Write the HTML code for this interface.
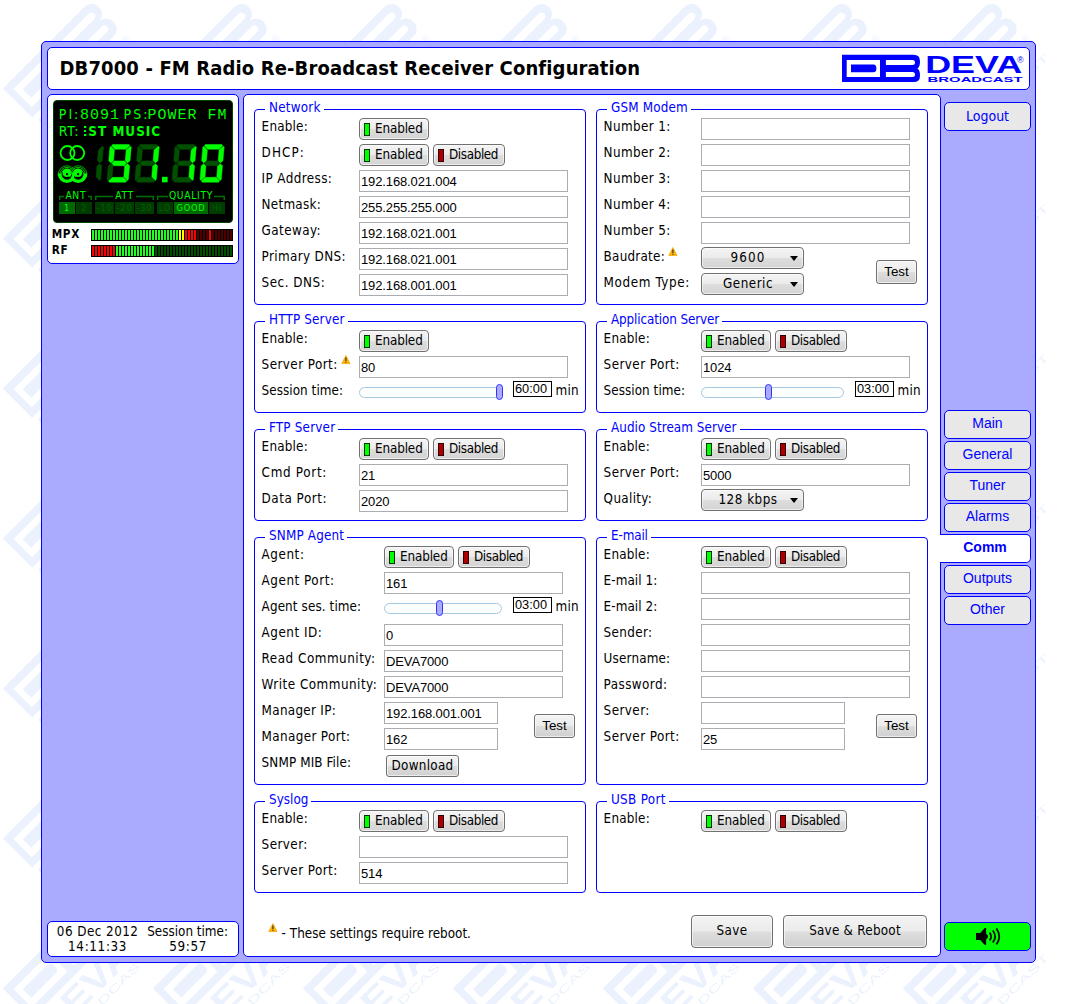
<!DOCTYPE html><html><head><meta charset="utf-8"><title>DB7000 - FM Radio Re-Broadcast Receiver Configuration</title><style>
*{box-sizing:border-box}
html,body{margin:0;padding:0}
body{width:1077px;height:1004px;position:relative;overflow:hidden;background:#fff;font-family:'DejaVu Sans Condensed','Liberation Sans',sans-serif;font-size:13.33px;color:#000}
.abs,.abs *{position:absolute}
div,span,svg,i,b{position:absolute;display:block}
.outer{left:41px;top:41px;width:995px;height:922px;background:#aaaaff;border:1px solid #0000ff;border-radius:5px}
.panel{background:#fff;border:1px solid #0000ff;border-radius:5px}
.fs{border:1px solid #0000ff;border-radius:4px}
.lg{background:#fff;color:#0000ff;height:14px;line-height:14px;padding:0 3px 0 4px;white-space:nowrap;letter-spacing:0.25px}
.lb{white-space:nowrap;height:16px;line-height:16px;letter-spacing:0.25px;margin-top:1px;margin-left:-0.4px}
.inp{background:#fff;border:1px solid #abadb3;height:22px;font-family:'Liberation Sans',sans-serif;font-size:13px;line-height:21px;padding-left:1px;white-space:nowrap;letter-spacing:-0.13px}
.btn{height:22px;border:1px solid #707070;border-radius:4px;background:linear-gradient(#f4f4f4 0%,#ebebeb 48%,#dddddd 52%,#d4d4d4 100%);white-space:nowrap;line-height:20px;box-shadow:inset 0 0 0 1px rgba(255,255,255,.6)}
.btn i{left:4px;top:4px;width:6px;height:13px;border:1px solid #003300;background:#00ff00}
.btn i.r{background:#aa0000;border-color:#330000}
.btn span{left:15px;top:0;font-size:13.33px;letter-spacing:0.05px}
.sel{height:22px;width:103px;border:1px solid #707070;border-radius:4px;background:linear-gradient(#f4f4f4 0%,#ebebeb 48%,#dddddd 52%,#d4d4d4 100%);line-height:20px;box-shadow:inset 0 0 0 1px rgba(255,255,255,.6)}
.sel span{left:0;width:92px;text-align:center;top:0;letter-spacing:0.5px}
.sel b{right:5px;top:8px;width:0;height:0;border-left:4px solid transparent;border-right:4px solid transparent;border-top:5px solid #000}
.pb{border:1px solid #707070;border-radius:3px;background:linear-gradient(#f4f4f4 0%,#ebebeb 48%,#dddddd 52%,#d0d0d0 100%);text-align:center;white-space:nowrap;box-shadow:inset 0 0 0 1px rgba(255,255,255,.6)}
.trk{height:11px;border:1px solid #a6c9e2;border-radius:6px;background:#fcfdfd}
.hdl{width:7px;height:16px;border:1px solid #3333ff;border-radius:4px;background:#aaaaff}
.tb{width:39px;height:16px;border:1px solid #000;background:#fff;font-family:'Liberation Sans',sans-serif;font-size:12.8px;line-height:14.5px;text-align:center;white-space:nowrap;padding-right:3px}
.nav{left:944px;width:87px;height:29px;border:1px solid #0000ff;border-radius:5px;background:#e8e8e8;color:#0000ff;font-family:'Liberation Sans',sans-serif;font-size:14px;line-height:25px;text-align:center}
.nav.act{left:940px;width:91px;background:#fff;border-left:none;border-radius:0 5px 5px 0;font-weight:bold;padding-left:0}
</style></head><body>
<svg width="1077" height="1004" viewBox="0 0 1077 1004" style="left:0;top:0"><defs><pattern id="wm" x="-1" y="-2" width="150" height="150" patternUnits="userSpaceOnUse"><g transform="translate(1,2)"><g transform="translate(2.8,88.5) rotate(-45)"><g transform="scale(1.52) translate(-1,-0.8)"><path fill="#ebf2fd" fill-rule="evenodd" d="M1.0 0.8 H76.60000000000001 A6.6 6.825 0 0 1 77.50000000000001 14.450000000000001 A6.6 6.825 0 0 1 76.60000000000001 28.1 H1.0 Z M5.7 6 H39 V23 H5.7 Z M44.9 6 H75.7 A2.5 2.5 0 0 1 75.7 11 H44.9 Z M44.9 18 H75.7 A2.5 2.5 0 0 1 75.7 23 H44.9 Z"/><path fill="#ebf2fd" d="M10 10.4 H32.5 Q35.6 10.4 35.6 14.4 Q35.6 18.4 32.5 18.4 H10 Z"/></g><text x="0" y="70.5" font-family="'Liberation Sans',sans-serif" font-weight="bold" font-size="34" fill="#ebf2fd" textLength="116" lengthAdjust="spacingAndGlyphs">DEVA</text><text x="1" y="82.5" font-family="'Liberation Sans',sans-serif" font-size="10.5" fill="#ebf2fd" textLength="124" lengthAdjust="spacingAndGlyphs">BROADCAST</text><text x="117.5" y="56" font-family="'Liberation Sans',sans-serif" font-size="11" fill="#ebf2fd">®</text></g></g></pattern></defs><rect width="1077" height="1004" fill="#fff"/><rect width="1050" height="1004" fill="url(#wm)"/></svg>
<div class="outer"></div>
<div class="panel" style="left:47px;top:47px;width:983px;height:43px"></div>
<div style="left:59.5px;top:55px;height:26px;line-height:26px;font-weight:bold;font-size:20px;white-space:nowrap;letter-spacing:0.13px" id="title">DB7000 - FM Radio Re-Broadcast Receiver Configuration</div>
<svg width="82" height="29" viewBox="0 0 82 29" style="left:841px;top:54px"><path fill="#0000ff" fill-rule="evenodd" d="M1.0 0.8 H72.6 Q79.0 0.8 79.0 7.2 Q79.0 13.250000000000002 76.4 14.450000000000001 Q79.0 15.65 79.0 21.700000000000003 Q79.0 28.1 72.6 28.1 H1.0 Z M5.7 6 H39 V23 H5.7 Z M44.9 6 H71.5 Q74 6 74 8.5 Q74 11 71.5 11 H44.9 Z M44.9 18 H71.5 Q74 18 74 20.5 Q74 23 71.5 23 H44.9 Z"/><path fill="#0000ff" d="M10 10.6 H32.5 Q35.4 10.6 35.4 14.4 Q35.4 18.2 32.5 18.2 H10 Z"/></svg>
<svg width="104" height="32" viewBox="0 0 104 32" style="left:924px;top:52px"><text x="1.2" y="21" font-family="'Liberation Sans',sans-serif" font-weight="bold" font-size="23.6" fill="#0000ff" textLength="97" lengthAdjust="spacingAndGlyphs">DEVA</text><text x="3.6" y="29.9" font-family="'Liberation Sans',sans-serif" font-weight="bold" font-size="7.6" fill="#0000ff" textLength="95" lengthAdjust="spacingAndGlyphs">BROADCAST</text><text x="93.2" y="10.6" font-family="'Liberation Sans',sans-serif" font-size="8.5" fill="#0000ff">®</text></svg>
<div class="panel" style="left:47px;top:94px;width:192px;height:170px"></div>
<div style="left:53px;top:100px;width:180px;height:123px;background:#000;border:1px solid #004400;border-radius:4px"></div>
<div style="left:58.8px;top:106px;height:16px;line-height:16px;color:#00ff00;white-space:pre;font-size:14px;letter-spacing:2px">PI:</div>
<div style="left:80px;top:107px;height:16px;line-height:16px;color:#00ff00;white-space:pre;font-family:'Liberation Mono',monospace;font-size:15px;letter-spacing:1px;height:18px;line-height:18px">8091</div>
<div style="left:123.6px;top:106px;height:16px;line-height:16px;color:#00ff00;white-space:pre;font-size:14px;letter-spacing:2px">PS:</div>
<div style="left:147.4px;top:107px;height:16px;line-height:16px;color:#00ff00;white-space:pre;font-family:'Liberation Mono',monospace;font-size:15px;letter-spacing:1px;height:18px;line-height:18px">POWER FM</div>
<div style="left:58.8px;top:123px;height:16px;line-height:16px;color:#00ff00;white-space:pre;font-size:14px;letter-spacing:0.8px">RT:</div>
<div style="left:84px;top:124px;width:146px;height:16px;overflow:hidden"><div style="left:-5px;top:0;height:16px;line-height:16px;color:#00ff00;white-space:nowrap;font-weight:bold;letter-spacing:1.05px">EST MUSIC</div></div>
<svg width="181" height="123" viewBox="53 100 181 123" style="left:53px;top:100px"><circle cx="67.5" cy="153" r="7" fill="none" stroke="#00ff00" stroke-width="1.8"/><circle cx="77.2" cy="153" r="7" fill="none" stroke="#00ff00" stroke-width="1.8"/><path d="M61.5 174.5 A5.5 5.5 0 0 1 72.5 174.5" fill="none" stroke="#00d800" stroke-width="1.0"/><path d="M59.85 174.5 A7.15 7.15 0 0 1 74.15 174.5" fill="none" stroke="#00c800" stroke-width="0.95"/><path d="M58.25 174.5 A8.75 8.75 0 0 1 75.75 174.5" fill="none" stroke="#00b000" stroke-width="0.95"/><path d="M72.6 174.5 A5.5 5.5 0 0 1 83.6 174.5" fill="none" stroke="#00d800" stroke-width="1.0"/><path d="M70.94999999999999 174.5 A7.15 7.15 0 0 1 85.25 174.5" fill="none" stroke="#00c800" stroke-width="0.95"/><path d="M69.35 174.5 A8.75 8.75 0 0 1 86.85 174.5" fill="none" stroke="#00b000" stroke-width="0.95"/><path d="M59.7 173.6 A7.3 7.3 0 0 0 74.3 173.6" fill="none" stroke="#00ff00" stroke-width="4.0"/><path d="M70.8 173.6 A7.3 7.3 0 0 0 85.39999999999999 173.6" fill="none" stroke="#00ff00" stroke-width="4.0"/><path d="M62.25 174.3 A4.75 4.75 0 0 0 71.75 174.3" fill="none" stroke="#000" stroke-width="1.2"/><path d="M62.3 174.8 A4.7 4.7 0 0 0 71.7 174.8" fill="none" stroke="#006800" stroke-width="0.8" stroke-dasharray="1 1"/><circle cx="66.85" cy="172.9" r="4.1" fill="#00ff00"/><circle cx="67.0" cy="174.1" r="1.2" fill="#000"/><path d="M73.35 174.3 A4.75 4.75 0 0 0 82.85 174.3" fill="none" stroke="#000" stroke-width="1.2"/><path d="M73.39999999999999 174.8 A4.7 4.7 0 0 0 82.8 174.8" fill="none" stroke="#006800" stroke-width="0.8" stroke-dasharray="1 1"/><circle cx="77.94999999999999" cy="172.9" r="4.1" fill="#00ff00"/><circle cx="78.1" cy="174.1" r="1.2" fill="#000"/><path d="M72.3 180.5 Q72.2 176 74.6 172.2" fill="none" stroke="#00ff00" stroke-width="2.2"/><polygon points="112.61,144.45 129.01,144.45 129.78,145.75 125.91,149.25 114.87,149.25 111.62,145.75" fill="#00ff00" stroke="#00ff00" stroke-width="0.5" stroke-linejoin="round"/><polygon points="131.22,147.20 130.04,160.75 127.44,162.97 125.27,160.39 126.18,149.94 130.31,146.14" fill="#00ff00" stroke="#00ff00" stroke-width="0.5" stroke-linejoin="round"/><polygon points="129.59,165.85 128.40,179.40 127.31,180.46 123.84,176.66 124.76,166.21 127.38,163.63" fill="#00ff00" stroke="#00ff00" stroke-width="0.5" stroke-linejoin="round"/><polygon points="112.41,177.35 123.45,177.35 126.71,180.85 125.71,182.15 109.31,182.15 108.55,180.85" fill="#00ff00" stroke="#00ff00" stroke-width="0.5" stroke-linejoin="round"/><polygon points="108.29,165.85 110.88,163.63 113.06,166.21 112.14,176.66 108.01,180.46 107.10,179.40" fill="#005000" stroke="#005000" stroke-width="0.5" stroke-linejoin="round"/><polygon points="109.92,147.20 111.01,146.14 114.48,149.94 113.57,160.39 110.94,162.97 108.74,160.75" fill="#00ff00" stroke="#00ff00" stroke-width="0.5" stroke-linejoin="round"/><polygon points="111.81,163.30 114.03,160.90 124.71,160.90 126.51,163.30 124.29,165.70 113.61,165.70" fill="#00ff00" stroke="#00ff00" stroke-width="0.5" stroke-linejoin="round"/><polygon points="140.51,144.45 156.91,144.45 157.68,145.75 153.81,149.25 142.77,149.25 139.52,145.75" fill="#005000" stroke="#005000" stroke-width="0.5" stroke-linejoin="round"/><polygon points="159.12,147.20 157.94,160.75 155.34,162.97 153.17,160.39 154.08,149.94 158.21,146.14" fill="#00ff00" stroke="#00ff00" stroke-width="0.5" stroke-linejoin="round"/><polygon points="157.49,165.85 156.30,179.40 155.21,180.46 151.74,176.66 152.66,166.21 155.28,163.63" fill="#00ff00" stroke="#00ff00" stroke-width="0.5" stroke-linejoin="round"/><polygon points="140.31,177.35 151.35,177.35 154.61,180.85 153.61,182.15 137.21,182.15 136.45,180.85" fill="#005000" stroke="#005000" stroke-width="0.5" stroke-linejoin="round"/><polygon points="136.19,165.85 138.78,163.63 140.96,166.21 140.04,176.66 135.91,180.46 135.00,179.40" fill="#005000" stroke="#005000" stroke-width="0.5" stroke-linejoin="round"/><polygon points="137.82,147.20 138.91,146.14 142.38,149.94 141.47,160.39 138.84,162.97 136.64,160.75" fill="#005000" stroke="#005000" stroke-width="0.5" stroke-linejoin="round"/><polygon points="139.71,163.30 141.93,160.90 152.61,160.90 154.41,163.30 152.19,165.70 141.51,165.70" fill="#005000" stroke="#005000" stroke-width="0.5" stroke-linejoin="round"/><polygon points="177.61,144.45 194.01,144.45 194.78,145.75 190.91,149.25 179.87,149.25 176.62,145.75" fill="#005000" stroke="#005000" stroke-width="0.5" stroke-linejoin="round"/><polygon points="196.22,147.20 195.04,160.75 192.44,162.97 190.27,160.39 191.18,149.94 195.31,146.14" fill="#00ff00" stroke="#00ff00" stroke-width="0.5" stroke-linejoin="round"/><polygon points="194.59,165.85 193.40,179.40 192.31,180.46 188.84,176.66 189.76,166.21 192.38,163.63" fill="#00ff00" stroke="#00ff00" stroke-width="0.5" stroke-linejoin="round"/><polygon points="177.41,177.35 188.45,177.35 191.71,180.85 190.71,182.15 174.31,182.15 173.55,180.85" fill="#005000" stroke="#005000" stroke-width="0.5" stroke-linejoin="round"/><polygon points="173.29,165.85 175.88,163.63 178.06,166.21 177.14,176.66 173.01,180.46 172.10,179.40" fill="#005000" stroke="#005000" stroke-width="0.5" stroke-linejoin="round"/><polygon points="174.92,147.20 176.01,146.14 179.48,149.94 178.57,160.39 175.94,162.97 173.74,160.75" fill="#005000" stroke="#005000" stroke-width="0.5" stroke-linejoin="round"/><polygon points="176.81,163.30 179.03,160.90 189.71,160.90 191.51,163.30 189.29,165.70 178.61,165.70" fill="#005000" stroke="#005000" stroke-width="0.5" stroke-linejoin="round"/><polygon points="205.51,144.45 221.91,144.45 222.68,145.75 218.81,149.25 207.77,149.25 204.52,145.75" fill="#00ff00" stroke="#00ff00" stroke-width="0.5" stroke-linejoin="round"/><polygon points="224.12,147.20 222.94,160.75 220.34,162.97 218.17,160.39 219.08,149.94 223.21,146.14" fill="#00ff00" stroke="#00ff00" stroke-width="0.5" stroke-linejoin="round"/><polygon points="222.49,165.85 221.30,179.40 220.21,180.46 216.74,176.66 217.66,166.21 220.28,163.63" fill="#00ff00" stroke="#00ff00" stroke-width="0.5" stroke-linejoin="round"/><polygon points="205.31,177.35 216.35,177.35 219.61,180.85 218.61,182.15 202.21,182.15 201.45,180.85" fill="#00ff00" stroke="#00ff00" stroke-width="0.5" stroke-linejoin="round"/><polygon points="201.19,165.85 203.78,163.63 205.96,166.21 205.04,176.66 200.91,180.46 200.00,179.40" fill="#00ff00" stroke="#00ff00" stroke-width="0.5" stroke-linejoin="round"/><polygon points="202.82,147.20 203.91,146.14 207.38,149.94 206.47,160.39 203.84,162.97 201.64,160.75" fill="#00ff00" stroke="#00ff00" stroke-width="0.5" stroke-linejoin="round"/><polygon points="204.71,163.30 206.93,160.90 217.61,160.90 219.41,163.30 217.19,165.70 206.51,165.70" fill="#005000" stroke="#005000" stroke-width="0.5" stroke-linejoin="round"/><polygon points="103.42,147.20 102.24,160.75 99.64,162.97 97.47,160.39 98.38,149.94 102.51,146.14" fill="#005000" stroke="#005000" stroke-width="0.5" stroke-linejoin="round"/><polygon points="101.79,165.85 100.60,179.40 99.51,180.46 96.04,176.66 96.96,166.21 99.58,163.63" fill="#005000" stroke="#005000" stroke-width="0.5" stroke-linejoin="round"/><rect x="162" y="176.8" width="5.6" height="5.5" fill="#00ff00"/><path d="M59.75 200 V196.5 H64 M88 196.5 H91.25 V200" fill="none" stroke="#007000" stroke-width="1.5"/><path d="M95.75 200 V196.5 H113 M136 196.5 H153.25 V200" fill="none" stroke="#007000" stroke-width="1.5"/><path d="M157.75 200 V196.5 H168 M214 196.5 H224.25 V200" fill="none" stroke="#007000" stroke-width="1.5"/></svg>
<div style="left:45.8px;top:189.5px;width:60px;text-align:center;height:12px;line-height:12px;font-size:10.2px;letter-spacing:0.7px;color:#00ff00;white-space:nowrap">ANT</div>
<div style="left:94.5px;top:189.5px;width:60px;text-align:center;height:12px;line-height:12px;font-size:10.2px;letter-spacing:0.7px;color:#00ff00;white-space:nowrap">ATT</div>
<div style="left:161px;top:189.5px;width:60px;text-align:center;height:12px;line-height:12px;font-size:10.2px;letter-spacing:0.7px;color:#00ff00;white-space:nowrap">QUALITY</div>
<div style="left:59px;top:202px;width:16px;height:12px;background:#006800;color:#00ff00;font-size:9.2px;letter-spacing:0.8px;line-height:12.5px;text-align:center;white-space:nowrap">1</div>
<div style="left:76px;top:202px;width:16px;height:12px;background:#003c00;color:#006000;font-size:9.2px;letter-spacing:0.8px;line-height:12.5px;text-align:center;white-space:nowrap">2</div>
<div style="left:95px;top:202px;width:19px;height:12px;background:#003c00;color:#006000;font-size:9.2px;letter-spacing:0.8px;line-height:12.5px;text-align:center;white-space:nowrap">-10</div>
<div style="left:115px;top:202px;width:19px;height:12px;background:#003c00;color:#006000;font-size:9.2px;letter-spacing:0.8px;line-height:12.5px;text-align:center;white-space:nowrap">-20</div>
<div style="left:135px;top:202px;width:19px;height:12px;background:#003c00;color:#006000;font-size:9.2px;letter-spacing:0.8px;line-height:12.5px;text-align:center;white-space:nowrap">-30</div>
<div style="left:157px;top:202px;width:16px;height:12px;background:#003c00;color:#006000;font-size:9.2px;letter-spacing:0.8px;line-height:12.5px;text-align:center;white-space:nowrap">LO</div>
<div style="left:174px;top:202px;width:34px;height:12px;background:#006800;color:#00ff00;font-size:9.2px;letter-spacing:0.8px;line-height:12.5px;text-align:center;white-space:nowrap">GOOD</div>
<div style="left:209px;top:202px;width:16px;height:12px;background:#003c00;color:#006000;font-size:9.2px;letter-spacing:0.8px;line-height:12.5px;text-align:center;white-space:nowrap">HI</div>
<div style="left:51.7px;top:227px;height:14px;line-height:14px;font-weight:bold;font-size:11.7px;letter-spacing:0.7px;white-space:nowrap">MPX</div>
<div style="left:51.7px;top:243px;height:14px;line-height:14px;font-weight:bold;font-size:11.7px;letter-spacing:0.7px;white-space:nowrap">RF</div>
<svg width="142" height="12" viewBox="0 0 142 12" style="left:91px;top:229px" shape-rendering="crispEdges"><rect width="142" height="12" fill="#000"/><rect x="1" y="1" width="2" height="10" fill="#22ff22"/><rect x="4" y="1" width="2" height="10" fill="#22ff22"/><rect x="7" y="1" width="2" height="10" fill="#22ff22"/><rect x="10" y="1" width="2" height="10" fill="#22ff22"/><rect x="13" y="1" width="2" height="10" fill="#22ff22"/><rect x="16" y="1" width="2" height="10" fill="#22ff22"/><rect x="19" y="1" width="2" height="10" fill="#22ff22"/><rect x="22" y="1" width="2" height="10" fill="#22ff22"/><rect x="25" y="1" width="2" height="10" fill="#22ff22"/><rect x="28" y="1" width="2" height="10" fill="#22ff22"/><rect x="31" y="1" width="2" height="10" fill="#22ff22"/><rect x="34" y="1" width="2" height="10" fill="#22ff22"/><rect x="37" y="1" width="2" height="10" fill="#22ff22"/><rect x="40" y="1" width="2" height="10" fill="#22ff22"/><rect x="43" y="1" width="2" height="10" fill="#22ff22"/><rect x="46" y="1" width="2" height="10" fill="#22ff22"/><rect x="49" y="1" width="2" height="10" fill="#22ff22"/><rect x="52" y="1" width="2" height="10" fill="#22ff22"/><rect x="55" y="1" width="2" height="10" fill="#22ff22"/><rect x="58" y="1" width="2" height="10" fill="#22ff22"/><rect x="61" y="1" width="2" height="10" fill="#22ff22"/><rect x="64" y="1" width="2" height="10" fill="#22ff22"/><rect x="67" y="1" width="2" height="10" fill="#22ff22"/><rect x="70" y="1" width="2" height="10" fill="#22ff22"/><rect x="73" y="1" width="2" height="10" fill="#22ff22"/><rect x="76" y="1" width="2" height="10" fill="#22ff22"/><rect x="79" y="1" width="2" height="10" fill="#22ff22"/><rect x="82" y="1" width="2" height="10" fill="#22ff22"/><rect x="85" y="1" width="2" height="10" fill="#22ff22"/><rect x="88" y="1" width="2" height="10" fill="#ffff00"/><rect x="91" y="1" width="2" height="10" fill="#ffff00"/><rect x="94" y="1" width="2" height="10" fill="#ff0000"/><rect x="97" y="1" width="2" height="10" fill="#ff0000"/><rect x="100" y="1" width="2" height="10" fill="#ff0000"/><rect x="103" y="1" width="2" height="10" fill="#ff0000"/><rect x="106" y="1" width="2" height="10" fill="#500000"/><rect x="109" y="1" width="2" height="10" fill="#500000"/><rect x="112" y="1" width="2" height="10" fill="#500000"/><rect x="115" y="1" width="2" height="10" fill="#500000"/><rect x="118" y="1" width="2" height="10" fill="#ff0000"/><rect x="121" y="1" width="2" height="10" fill="#500000"/><rect x="124" y="1" width="2" height="10" fill="#500000"/><rect x="127" y="1" width="2" height="10" fill="#500000"/><rect x="130" y="1" width="2" height="10" fill="#500000"/><rect x="133" y="1" width="2" height="10" fill="#500000"/><rect x="136" y="1" width="2" height="10" fill="#500000"/><rect x="139" y="1" width="2" height="10" fill="#500000"/></svg>
<svg width="142" height="12" viewBox="0 0 142 12" style="left:91px;top:245px" shape-rendering="crispEdges"><rect width="142" height="12" fill="#000"/><rect x="1" y="1" width="2" height="10" fill="#ff0000"/><rect x="4" y="1" width="2" height="10" fill="#ff0000"/><rect x="7" y="1" width="2" height="10" fill="#ff0000"/><rect x="10" y="1" width="2" height="10" fill="#ff0000"/><rect x="13" y="1" width="2" height="10" fill="#ff0000"/><rect x="16" y="1" width="2" height="10" fill="#ff0000"/><rect x="19" y="1" width="2" height="10" fill="#ff0000"/><rect x="22" y="1" width="2" height="10" fill="#ff0000"/><rect x="25" y="1" width="2" height="10" fill="#22ff22"/><rect x="28" y="1" width="2" height="10" fill="#22ff22"/><rect x="31" y="1" width="2" height="10" fill="#22ff22"/><rect x="34" y="1" width="2" height="10" fill="#22ff22"/><rect x="37" y="1" width="2" height="10" fill="#22ff22"/><rect x="40" y="1" width="2" height="10" fill="#22ff22"/><rect x="43" y="1" width="2" height="10" fill="#22ff22"/><rect x="46" y="1" width="2" height="10" fill="#22ff22"/><rect x="49" y="1" width="2" height="10" fill="#22ff22"/><rect x="52" y="1" width="2" height="10" fill="#22ff22"/><rect x="55" y="1" width="2" height="10" fill="#22ff22"/><rect x="58" y="1" width="2" height="10" fill="#22ff22"/><rect x="61" y="1" width="2" height="10" fill="#22ff22"/><rect x="64" y="1" width="2" height="10" fill="#005000"/><rect x="67" y="1" width="2" height="10" fill="#005000"/><rect x="70" y="1" width="2" height="10" fill="#005000"/><rect x="73" y="1" width="2" height="10" fill="#005000"/><rect x="76" y="1" width="2" height="10" fill="#005000"/><rect x="79" y="1" width="2" height="10" fill="#005000"/><rect x="82" y="1" width="2" height="10" fill="#005000"/><rect x="85" y="1" width="2" height="10" fill="#005000"/><rect x="88" y="1" width="2" height="10" fill="#005000"/><rect x="91" y="1" width="2" height="10" fill="#005000"/><rect x="94" y="1" width="2" height="10" fill="#005000"/><rect x="97" y="1" width="2" height="10" fill="#005000"/><rect x="100" y="1" width="2" height="10" fill="#005000"/><rect x="103" y="1" width="2" height="10" fill="#005000"/><rect x="106" y="1" width="2" height="10" fill="#005000"/><rect x="109" y="1" width="2" height="10" fill="#005000"/><rect x="112" y="1" width="2" height="10" fill="#005000"/><rect x="115" y="1" width="2" height="10" fill="#005000"/><rect x="118" y="1" width="2" height="10" fill="#005000"/><rect x="121" y="1" width="2" height="10" fill="#005000"/><rect x="124" y="1" width="2" height="10" fill="#005000"/><rect x="127" y="1" width="2" height="10" fill="#005000"/><rect x="130" y="1" width="2" height="10" fill="#005000"/><rect x="133" y="1" width="2" height="10" fill="#005000"/><rect x="136" y="1" width="2" height="10" fill="#005000"/><rect x="139" y="1" width="2" height="10" fill="#005000"/></svg>
<div class="panel" style="left:47px;top:921px;width:192px;height:36px"></div>
<div class="lb" style="left:48px;top:923px;width:100px;text-align:center;letter-spacing:0.45px">06 Dec 2012</div>
<div class="lb" style="left:48px;top:938px;width:100px;text-align:center;letter-spacing:0.65px">14:11:33</div>
<div class="lb" style="left:138px;top:923px;width:100px;text-align:center;letter-spacing:0">Session time:</div>
<div class="lb" style="left:138.5px;top:938px;width:100px;text-align:center;letter-spacing:0.65px">59:57</div>
<div class="panel" style="left:243px;top:94px;width:698px;height:863px"></div>
<div class="nav" style="top:102px;font-family:'DejaVu Sans Condensed','Liberation Sans',sans-serif;font-size:14px;line-height:27px">Logout</div>
<div class="nav" style="top:410px">Main</div>
<div class="nav" style="top:441px">General</div>
<div class="nav" style="top:472px">Tuner</div>
<div class="nav" style="top:503px">Alarms</div>
<div class="nav act" style="top:534px">Comm</div>
<div class="nav" style="top:565px">Outputs</div>
<div class="nav" style="top:596px">Other</div>
<div class="nav" style="top:922px;background:#00ff00"></div>
<svg width="30" height="21" viewBox="0 0 30 21" style="left:973px;top:926px"><path d="M3 7.1 H7.2 L11.8 2 H13.1 V7.6 L14.8 9.4 V11.7 L13.1 13.5 V19 H11.8 L7.2 13.9 H3 Z" fill="#000"/><path d="M16.6 6.6 Q19.8 10.5 16.6 14.4" fill="none" stroke="#000" stroke-width="1.7"/><path d="M19.8 4.4 Q24.4 10.5 19.8 16.6" fill="none" stroke="#000" stroke-width="1.7"/><path d="M23.4 2.4 Q29.2 10.5 23.4 18.6" fill="none" stroke="#000" stroke-width="1.7"/></svg>
<div class="fs" style="left:254px;top:109px;width:332px;height:196px"></div>
<div class="lg" style="left:265px;top:101px;letter-spacing:0.22px">Network</div>
<div class="lb" style="left:262px;top:118px;letter-spacing:0.199px">Enable:</div>
<div class="lb" style="left:262px;top:144px;letter-spacing:1.065px">DHCP:</div>
<div class="lb" style="left:262px;top:170px;letter-spacing:0.388px">IP Address:</div>
<div class="lb" style="left:262px;top:196px;letter-spacing:0.252px">Netmask:</div>
<div class="lb" style="left:262px;top:222px;letter-spacing:0.42px">Gateway:</div>
<div class="lb" style="left:262px;top:248px;letter-spacing:0.358px">Primary DNS:</div>
<div class="lb" style="left:262px;top:274px;letter-spacing:0.51px">Sec. DNS:</div>
<div class="btn" style="left:359px;top:118px;width:70px"><i></i><span style="letter-spacing:-0.12px">Enabled</span></div>
<div class="btn" style="left:359px;top:144px;width:70px"><i></i><span style="letter-spacing:-0.12px">Enabled</span></div>
<div class="btn" style="left:433px;top:144px;width:72px"><i class="r"></i><span style="letter-spacing:-0.38px">Disabled</span></div>
<div class="inp" style="left:359px;top:170px;width:209px">192.168.021.004</div>
<div class="inp" style="left:359px;top:196px;width:209px">255.255.255.000</div>
<div class="inp" style="left:359px;top:222px;width:209px">192.168.021.001</div>
<div class="inp" style="left:359px;top:248px;width:209px">192.168.021.001</div>
<div class="inp" style="left:359px;top:274px;width:209px">192.168.001.001</div>
<div class="fs" style="left:596px;top:109px;width:332px;height:196px"></div>
<div class="lg" style="left:607px;top:101px;letter-spacing:0.15px">GSM Modem</div>
<div class="lb" style="left:604px;top:118px;letter-spacing:0.393px">Number 1:</div>
<div class="lb" style="left:604px;top:144px;letter-spacing:0.393px">Number 2:</div>
<div class="lb" style="left:604px;top:170px;letter-spacing:0.393px">Number 3:</div>
<div class="lb" style="left:604px;top:196px;letter-spacing:0.393px">Number 4:</div>
<div class="lb" style="left:604px;top:222px;letter-spacing:0.393px">Number 5:</div>
<div class="lb" style="left:604px;top:248px;letter-spacing:0.237px">Baudrate:</div>
<div class="lb" style="left:604px;top:274px;letter-spacing:0.605px">Modem Type:</div>
<div class="inp" style="left:701px;top:118px;width:209px"></div>
<div class="inp" style="left:701px;top:144px;width:209px"></div>
<div class="inp" style="left:701px;top:170px;width:209px"></div>
<div class="inp" style="left:701px;top:196px;width:209px"></div>
<div class="inp" style="left:701px;top:222px;width:209px"></div>
<svg class="wn" width="10" height="10" viewBox="0 0 10 10" style="left:667.6px;top:246.8px"><path d="M4.9 0.5 L9.0 8.55 L0.8 8.55 Z" fill="#ffb400" stroke="#f7a000" stroke-width="0.7" stroke-linejoin="round"/><rect x="4.35" y="2.5" width="1.1" height="3.6" fill="#2a2a2a"/><rect x="4.35" y="6.8" width="1.1" height="1.0" fill="#2a2a2a"/></svg>
<div class="sel" style="left:701px;top:247px"><span style="letter-spacing:1.1px">9600</span><b></b></div>
<div class="sel" style="left:701px;top:273px"><span>Generic</span><b></b></div>
<div class="pb" style="left:876px;top:260px;width:41px;height:24px;line-height:22px;font-family:'Liberation Sans',sans-serif;font-size:13.33px;border-radius:3px;letter-spacing:0px">Test</div>
<div class="fs" style="left:254px;top:321px;width:332px;height:92px"></div>
<div class="lg" style="left:265px;top:313px;letter-spacing:0.16px">HTTP Server</div>
<div class="lb" style="left:262px;top:330px;letter-spacing:0.199px">Enable:</div>
<div class="lb" style="left:262px;top:356px;letter-spacing:0.436px">Server Port:</div>
<div class="lb" style="left:262px;top:382px;letter-spacing:0.056px">Session time:</div>
<div class="btn" style="left:359px;top:330px;width:70px"><i></i><span style="letter-spacing:-0.12px">Enabled</span></div>
<div class="inp" style="left:359px;top:356px;width:209px">80</div>
<svg class="wn" width="10" height="10" viewBox="0 0 10 10" style="left:340.6px;top:354.8px"><path d="M4.9 0.5 L9.0 8.55 L0.8 8.55 Z" fill="#ffb400" stroke="#f7a000" stroke-width="0.7" stroke-linejoin="round"/><rect x="4.35" y="2.5" width="1.1" height="3.6" fill="#2a2a2a"/><rect x="4.35" y="6.8" width="1.1" height="1.0" fill="#2a2a2a"/></svg>
<div class="trk" style="left:359px;top:387px;width:143px"></div>
<div class="hdl" style="left:496px;top:384px"></div>
<div class="tb" style="left:513px;top:381px">60:00</div>
<div class="lb" style="left:556px;top:382px">min</div>
<div class="fs" style="left:596px;top:321px;width:332px;height:92px"></div>
<div class="lg" style="left:607px;top:313px;letter-spacing:-0.11px">Application Server</div>
<div class="lb" style="left:604px;top:330px;letter-spacing:0.199px">Enable:</div>
<div class="lb" style="left:604px;top:356px;letter-spacing:0.436px">Server Port:</div>
<div class="lb" style="left:604px;top:382px;letter-spacing:0.056px">Session time:</div>
<div class="btn" style="left:701px;top:330px;width:70px"><i></i><span style="letter-spacing:-0.12px">Enabled</span></div>
<div class="btn" style="left:775px;top:330px;width:72px"><i class="r"></i><span style="letter-spacing:-0.38px">Disabled</span></div>
<div class="inp" style="left:701px;top:356px;width:209px">1024</div>
<div class="trk" style="left:701px;top:387px;width:143px"></div>
<div class="hdl" style="left:765px;top:384px"></div>
<div class="tb" style="left:855px;top:381px">03:00</div>
<div class="lb" style="left:898px;top:382px">min</div>
<div class="fs" style="left:254px;top:429px;width:332px;height:92px"></div>
<div class="lg" style="left:265px;top:421px;letter-spacing:0.19px">FTP Server</div>
<div class="lb" style="left:262px;top:438px;letter-spacing:0.199px">Enable:</div>
<div class="lb" style="left:262px;top:464px;letter-spacing:0.688px">Cmd Port:</div>
<div class="lb" style="left:262px;top:490px;letter-spacing:0.515px">Data Port:</div>
<div class="btn" style="left:359px;top:438px;width:70px"><i></i><span style="letter-spacing:-0.12px">Enabled</span></div>
<div class="btn" style="left:433px;top:438px;width:72px"><i class="r"></i><span style="letter-spacing:-0.38px">Disabled</span></div>
<div class="inp" style="left:359px;top:464px;width:209px">21</div>
<div class="inp" style="left:359px;top:490px;width:209px">2020</div>
<div class="fs" style="left:596px;top:429px;width:332px;height:92px"></div>
<div class="lg" style="left:607px;top:421px;letter-spacing:0.06px">Audio Stream Server</div>
<div class="lb" style="left:604px;top:438px;letter-spacing:0.199px">Enable:</div>
<div class="lb" style="left:604px;top:464px;letter-spacing:0.436px">Server Port:</div>
<div class="lb" style="left:604px;top:490px;letter-spacing:0.33px">Quality:</div>
<div class="btn" style="left:701px;top:438px;width:70px"><i></i><span style="letter-spacing:-0.12px">Enabled</span></div>
<div class="btn" style="left:775px;top:438px;width:72px"><i class="r"></i><span style="letter-spacing:-0.38px">Disabled</span></div>
<div class="inp" style="left:701px;top:464px;width:209px">5000</div>
<div class="sel" style="left:701px;top:489px"><span>128 kbps</span><b></b></div>
<div class="fs" style="left:254px;top:537px;width:332px;height:248px"></div>
<div class="lg" style="left:265px;top:529px;letter-spacing:0.17px">SNMP Agent</div>
<div class="lb" style="left:262px;top:546px;letter-spacing:0.555px">Agent:</div>
<div class="lb" style="left:262px;top:572px;letter-spacing:0.527px">Agent Port:</div>
<div class="lb" style="left:262px;top:598px;letter-spacing:0.107px">Agent ses. time:</div>
<div class="lb" style="left:262px;top:624px;letter-spacing:0.503px">Agent ID:</div>
<div class="lb" style="left:262px;top:650px;letter-spacing:0.506px">Read Community:</div>
<div class="lb" style="left:262px;top:676px;letter-spacing:0.485px">Write Community:</div>
<div class="lb" style="left:262px;top:702px;letter-spacing:0.296px">Manager IP:</div>
<div class="lb" style="left:262px;top:728px;letter-spacing:0.357px">Manager Port:</div>
<div class="lb" style="left:262px;top:754px;letter-spacing:0.118px">SNMP MIB File:</div>
<div class="btn" style="left:384px;top:546px;width:70px"><i></i><span style="letter-spacing:-0.12px">Enabled</span></div>
<div class="btn" style="left:458px;top:546px;width:72px"><i class="r"></i><span style="letter-spacing:-0.38px">Disabled</span></div>
<div class="inp" style="left:384px;top:572px;width:179px">161</div>
<div class="trk" style="left:384px;top:603px;width:118px"></div>
<div class="hdl" style="left:436px;top:600px"></div>
<div class="tb" style="left:513px;top:597px">03:00</div>
<div class="lb" style="left:556px;top:598px">min</div>
<div class="inp" style="left:384px;top:624px;width:179px">0</div>
<div class="inp" style="left:384px;top:650px;width:179px">DEVA7000</div>
<div class="inp" style="left:384px;top:676px;width:179px">DEVA7000</div>
<div class="inp" style="left:384px;top:702px;width:114px">192.168.001.001</div>
<div class="inp" style="left:384px;top:728px;width:114px">162</div>
<div class="pb" style="left:534px;top:714px;width:41px;height:24px;line-height:22px;font-family:'Liberation Sans',sans-serif;font-size:13.33px;border-radius:3px;letter-spacing:0px">Test</div>
<div class="pb" style="left:386px;top:755px;width:73px;height:22px;line-height:20px;font-family:'DejaVu Sans Condensed','Liberation Sans',sans-serif;font-size:13.33px;border-radius:3px;letter-spacing:0.3px">Download</div>
<div class="fs" style="left:596px;top:537px;width:332px;height:248px"></div>
<div class="lg" style="left:607px;top:529px;letter-spacing:-0.13px">E-mail</div>
<div class="lb" style="left:604px;top:546px;letter-spacing:0.199px">Enable:</div>
<div class="lb" style="left:604px;top:572px;letter-spacing:0.073px">E-mail 1:</div>
<div class="lb" style="left:604px;top:598px;letter-spacing:0.073px">E-mail 2:</div>
<div class="lb" style="left:604px;top:624px;letter-spacing:0.35px">Sender:</div>
<div class="lb" style="left:604px;top:650px;letter-spacing:0.17px">Username:</div>
<div class="lb" style="left:604px;top:676px;letter-spacing:0.439px">Password:</div>
<div class="lb" style="left:604px;top:702px;letter-spacing:0.425px">Server:</div>
<div class="lb" style="left:604px;top:728px;letter-spacing:0.436px">Server Port:</div>
<div class="btn" style="left:701px;top:546px;width:70px"><i></i><span style="letter-spacing:-0.12px">Enabled</span></div>
<div class="btn" style="left:775px;top:546px;width:72px"><i class="r"></i><span style="letter-spacing:-0.38px">Disabled</span></div>
<div class="inp" style="left:701px;top:572px;width:209px"></div>
<div class="inp" style="left:701px;top:598px;width:209px"></div>
<div class="inp" style="left:701px;top:624px;width:209px"></div>
<div class="inp" style="left:701px;top:650px;width:209px"></div>
<div class="inp" style="left:701px;top:676px;width:209px"></div>
<div class="inp" style="left:701px;top:702px;width:144px"></div>
<div class="inp" style="left:701px;top:728px;width:144px">25</div>
<div class="pb" style="left:876px;top:714px;width:41px;height:24px;line-height:22px;font-family:'Liberation Sans',sans-serif;font-size:13.33px;border-radius:3px;letter-spacing:0px">Test</div>
<div class="fs" style="left:254px;top:801px;width:332px;height:92px"></div>
<div class="lg" style="left:265px;top:793px;letter-spacing:0.04px">Syslog</div>
<div class="lb" style="left:262px;top:810px;letter-spacing:0.199px">Enable:</div>
<div class="lb" style="left:262px;top:836px;letter-spacing:0.425px">Server:</div>
<div class="lb" style="left:262px;top:862px;letter-spacing:0.436px">Server Port:</div>
<div class="btn" style="left:359px;top:810px;width:70px"><i></i><span style="letter-spacing:-0.12px">Enabled</span></div>
<div class="btn" style="left:433px;top:810px;width:72px"><i class="r"></i><span style="letter-spacing:-0.38px">Disabled</span></div>
<div class="inp" style="left:359px;top:836px;width:209px"></div>
<div class="inp" style="left:359px;top:862px;width:209px">514</div>
<div class="fs" style="left:596px;top:801px;width:332px;height:92px"></div>
<div class="lg" style="left:607px;top:793px;letter-spacing:0.33px">USB Port</div>
<div class="lb" style="left:604px;top:810px;letter-spacing:0.199px">Enable:</div>
<div class="btn" style="left:701px;top:810px;width:70px"><i></i><span style="letter-spacing:-0.12px">Enabled</span></div>
<div class="btn" style="left:775px;top:810px;width:72px"><i class="r"></i><span style="letter-spacing:-0.38px">Disabled</span></div>
<svg class="wn" width="10" height="10" viewBox="0 0 10 10" style="left:268px;top:923px"><path d="M4.9 0.5 L9.0 8.55 L0.8 8.55 Z" fill="#ffb400" stroke="#f7a000" stroke-width="0.7" stroke-linejoin="round"/><rect x="4.35" y="2.5" width="1.1" height="3.6" fill="#2a2a2a"/><rect x="4.35" y="6.8" width="1.1" height="1.0" fill="#2a2a2a"/></svg>
<div class="lb" style="left:282px;top:925px;letter-spacing:0.02px">- These settings require reboot.</div>
<div class="pb" style="left:691px;top:915px;width:82px;height:33px;line-height:29px;font-family:'DejaVu Sans Condensed','Liberation Sans',sans-serif;font-size:13.33px;border-radius:4px;letter-spacing:0.4px">Save</div>
<div class="pb" style="left:783px;top:915px;width:144px;height:33px;line-height:29px;font-family:'DejaVu Sans Condensed','Liberation Sans',sans-serif;font-size:13.33px;border-radius:4px;letter-spacing:0.25px">Save &amp; Reboot</div>
</body></html>
